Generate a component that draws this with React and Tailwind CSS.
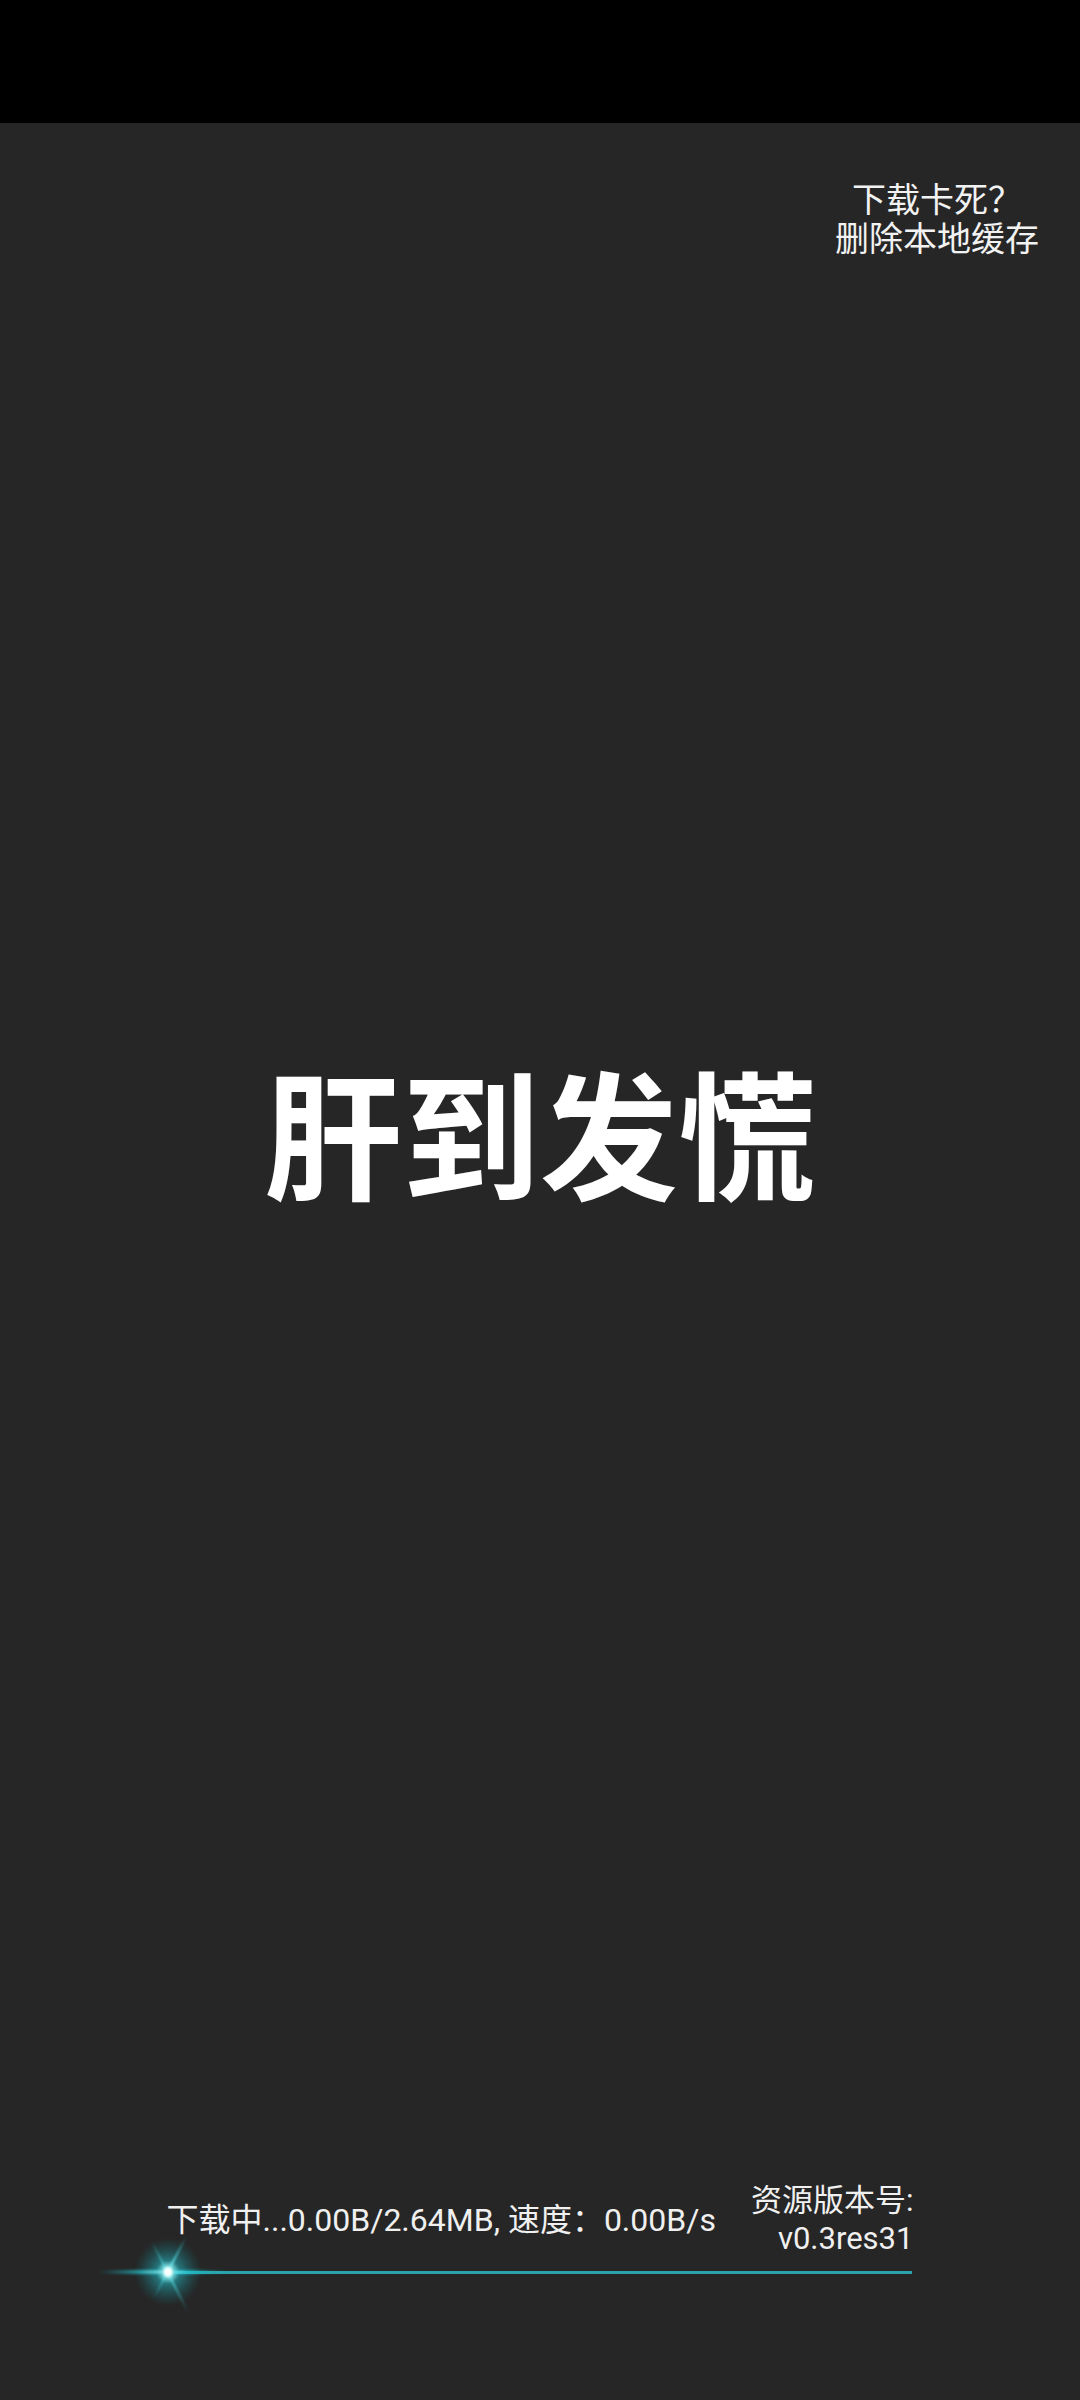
import React from 'react';

const font = { fontFamily: 'Roboto, "Noto Sans CJK SC", sans-serif' };

// glowing spark at the head of the progress line
const Spark = () => (
    <svg
        width="160"
        height="140"
        viewBox="0 0 160 140"
        className="absolute left-[-80px] top-[-69px] pointer-events-none"
    >
        <defs>
            <radialGradient id="glow" cx="50%" cy="50%" r="50%">
                <stop offset="0%" stopColor="#ffffff" stopOpacity="1" />
                <stop offset="12%" stopColor="#b8ffff" stopOpacity="0.95" />
                <stop offset="35%" stopColor="#22d3df" stopOpacity="0.45" />
                <stop offset="100%" stopColor="#0e8f99" stopOpacity="0" />
            </radialGradient>
            <radialGradient id="flare" cx="50%" cy="50%" r="50%">
                <stop offset="0%" stopColor="#c8ffff" stopOpacity="1" />
                <stop offset="40%" stopColor="#25c9d4" stopOpacity="0.7" />
                <stop offset="100%" stopColor="#1aa9b3" stopOpacity="0" />
            </radialGradient>
            <linearGradient id="rayA" x1="98" y1="35" x2="66" y2="96" gradientUnits="userSpaceOnUse">
                <stop offset="0%" stopColor="#2fd6e0" stopOpacity="0" />
                <stop offset="45%" stopColor="#6ff0f6" stopOpacity="0.9" />
                <stop offset="100%" stopColor="#2fd6e0" stopOpacity="0" />
            </linearGradient>
            <linearGradient id="rayB" x1="100" y1="110" x2="64" y2="40" gradientUnits="userSpaceOnUse">
                <stop offset="0%" stopColor="#2fd6e0" stopOpacity="0" />
                <stop offset="55%" stopColor="#6ff0f6" stopOpacity="0.8" />
                <stop offset="100%" stopColor="#2fd6e0" stopOpacity="0" />
            </linearGradient>
            <filter id="soft" x="-20%" y="-20%" width="140%" height="140%">
                <feGaussianBlur stdDeviation="0.8" />
            </filter>
        </defs>
        <circle cx="80" cy="70" r="34" fill="url(#glow)" />
        <ellipse cx="76" cy="70" rx="68" ry="3.5" fill="url(#flare)" filter="url(#soft)" />
        <line x1="98" y1="35" x2="66" y2="96" stroke="url(#rayA)" strokeWidth="2" filter="url(#soft)" />
        <line x1="100" y1="110" x2="64" y2="40" stroke="url(#rayB)" strokeWidth="2" filter="url(#soft)" />
        <circle cx="80" cy="70" r="4.5" fill="#ffffff" filter="url(#soft)" />
    </svg>
);

const App = () => {
    return (
        <div className="w-[1080px] h-[2400px] flex flex-col bg-[#262626] text-white" style={font}>
            {/* status bar */}
            <div className="h-[123px] bg-black shrink-0" />

            {/* clear cache link */}
            <div className="flex justify-end pr-[41px] mt-[58px]">
                <div className="text-[34px] leading-[39px] text-center text-[#f2f2f2]">
                    <div>下载卡死？</div>
                    <div>删除本地缓存</div>
                </div>
            </div>

            {/* title */}
            <div className="mt-[801px] flex justify-center">
                <h1
                    className="text-[138px] leading-none font-bold"
                    style={{ fontFamily: '"Noto Sans CJK SC", sans-serif' }}
                >
                    肝到发慌
                </h1>
            </div>

            {/* download status */}
            <div className="mt-auto mb-[126px] flex flex-col items-center">
                <div className="flex items-center justify-center gap-[35px] text-[#f0f0f0]">
                    <div className="text-[32px] leading-[38px] whitespace-nowrap">
                        下载中...0.00B/2.64MB, 速度：0.00B/s
                    </div>
                    <div className="text-[31px] leading-[38px] text-right whitespace-nowrap">
                        <div>资源版本号:</div>
                        <div>v0.3res31</div>
                    </div>
                </div>
                <div className="relative mt-[13px] w-[744px] h-[3px] bg-[#2aa3ac]">
                    <Spark />
                </div>
            </div>
        </div>
    );
};

export default App;
